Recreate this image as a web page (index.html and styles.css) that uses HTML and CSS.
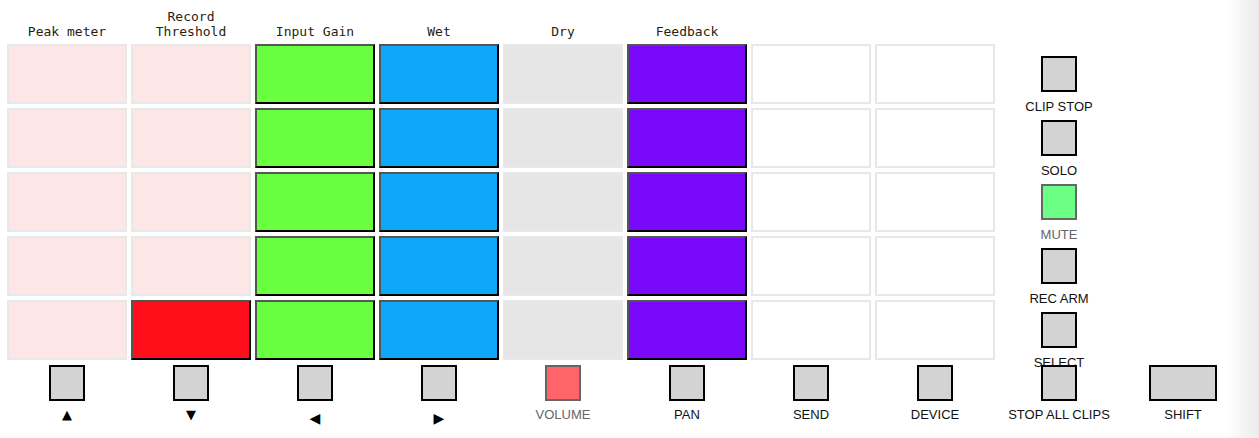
FILE: index.html
```html
<!DOCTYPE html>
<html>
<head>
<meta charset="utf-8">
<link rel="stylesheet" href="styles.css">
</head>
<body>
<div class="page">
  <div class="header">
    <div class="hlabel">Peak meter</div>
    <div class="hlabel">Record<br>Threshold</div>
    <div class="hlabel">Input Gain</div>
    <div class="hlabel">Wet</div>
    <div class="hlabel">Dry</div>
    <div class="hlabel">Feedback</div>
  </div>
  <div class="main">
    <div class="pads">
      <div class="pad peak"></div><div class="pad peak"></div><div class="pad on green"></div><div class="pad on blue"></div><div class="pad dry"></div><div class="pad on purple"></div><div class="pad"></div><div class="pad"></div>
      <div class="pad peak"></div><div class="pad peak"></div><div class="pad on green"></div><div class="pad on blue"></div><div class="pad dry"></div><div class="pad on purple"></div><div class="pad"></div><div class="pad"></div>
      <div class="pad peak"></div><div class="pad peak"></div><div class="pad on green"></div><div class="pad on blue"></div><div class="pad dry"></div><div class="pad on purple"></div><div class="pad"></div><div class="pad"></div>
      <div class="pad peak"></div><div class="pad peak"></div><div class="pad on green"></div><div class="pad on blue"></div><div class="pad dry"></div><div class="pad on purple"></div><div class="pad"></div><div class="pad"></div>
      <div class="pad peak"></div><div class="pad on red"></div><div class="pad on green"></div><div class="pad on blue"></div><div class="pad dry"></div><div class="pad on purple"></div><div class="pad"></div><div class="pad"></div>
    </div>
    <div class="side">
      <div class="side-cell"><div class="btn"></div><div class="blabel">CLIP STOP</div></div>
      <div class="side-cell"><div class="btn"></div><div class="blabel">SOLO</div></div>
      <div class="side-cell"><div class="btn active-green"></div><div class="blabel dim">MUTE</div></div>
      <div class="side-cell"><div class="btn"></div><div class="blabel">REC ARM</div></div>
      <div class="side-cell"><div class="btn"></div><div class="blabel">SELECT</div></div>
    </div>
  </div>
  <div class="bottom">
    <div class="bcell"><div class="btn"></div><div class="blabel arrow">▲</div></div>
    <div class="bcell"><div class="btn"></div><div class="blabel arrow">▼</div></div>
    <div class="bcell"><div class="btn"></div><div class="blabel arrow lr">◀</div></div>
    <div class="bcell"><div class="btn"></div><div class="blabel arrow lr">▶</div></div>
    <div class="bcell"><div class="btn active-red"></div><div class="blabel dim">VOLUME</div></div>
    <div class="bcell"><div class="btn"></div><div class="blabel">PAN</div></div>
    <div class="bcell"><div class="btn"></div><div class="blabel">SEND</div></div>
    <div class="bcell"><div class="btn"></div><div class="blabel">DEVICE</div></div>
    <div class="bcell"><div class="btn"></div><div class="blabel">STOP ALL CLIPS</div></div>
    <div class="bcell"><div class="btn wide"></div><div class="blabel">SHIFT</div></div>
  </div>
</div>
</body>
</html>
```
FILE: styles.css
```css
html, body {
  margin: 0;
  padding: 0;
}
body {
  width: 1259px;
  height: 438px;
  overflow: hidden;
  background: linear-gradient(to right, #ffffff 0, #ffffff 1226px, #ebebeb 1259px);
  font-family: "Liberation Sans", Arial, sans-serif;
}
.page {
  padding-left: 7px;
}
.header {
  display: grid;
  grid-template-columns: repeat(10, 120px);
  column-gap: 4px;
  height: 40px;
  align-items: end;
}
.hlabel {
  font-family: "DejaVu Sans Mono", "Liberation Mono", monospace;
  font-size: 13px;
  line-height: 15px;
  margin-bottom: 1px;
  color: #2a1c10;
  text-align: center;
}
.main {
  display: flex;
  margin-top: 4px;
}
.pads {
  display: grid;
  grid-template-columns: repeat(8, 120px);
  grid-template-rows: repeat(5, 60px);
  gap: 4px;
}
.pad {
  box-sizing: border-box;
  border: 2px solid #e8e8e8;
  background: #ffffff;
}
.pad.peak { background: #fde6e6; }
.pad.dry { background: #e6e6e6; }
.pad.on {
  border-color: #555555 #000000 #000000 #555555;
}
.pad.green { background: #68ff40; }
.pad.blue { background: #0fa8f9; }
.pad.purple { background: #7a08fa; }
.pad.red { background: #ff0f19; }
.side {
  margin-left: 4px;
  width: 120px;
  display: flex;
  flex-direction: column;
  gap: 4px;
}
.side-cell {
  height: 60px;
  box-sizing: border-box;
  padding-top: 12px;
  display: flex;
  flex-direction: column;
  align-items: center;
}
.btn {
  box-sizing: border-box;
  width: 36px;
  height: 36px;
  border: 2px solid #000000;
  background: #d3d3d3;
  flex: none;
}
.btn.wide { width: 68px; }
.btn.active-green {
  border-color: #666666;
  background: #6cff85;
}
.btn.active-red {
  border-color: #666666;
  background: #ff6469;
}
.blabel {
  margin-top: 7px;
  font-size: 13px;
  line-height: 16px;
  color: #111111;
  white-space: nowrap;
  text-align: center;
}
.blabel.dim { color: #666666; }
.bottom {
  display: grid;
  grid-template-columns: repeat(10, 120px);
  column-gap: 4px;
  margin-top: 5px;
}
.bcell {
  display: flex;
  flex-direction: column;
  align-items: center;
}
.bcell .blabel { margin-top: 6px; }
.arrow {
  font-family: "DejaVu Sans", sans-serif;
  font-size: 13px;
  color: #000;
}
.arrow.lr { padding-top: 3px; font-size: 14px; }
```
